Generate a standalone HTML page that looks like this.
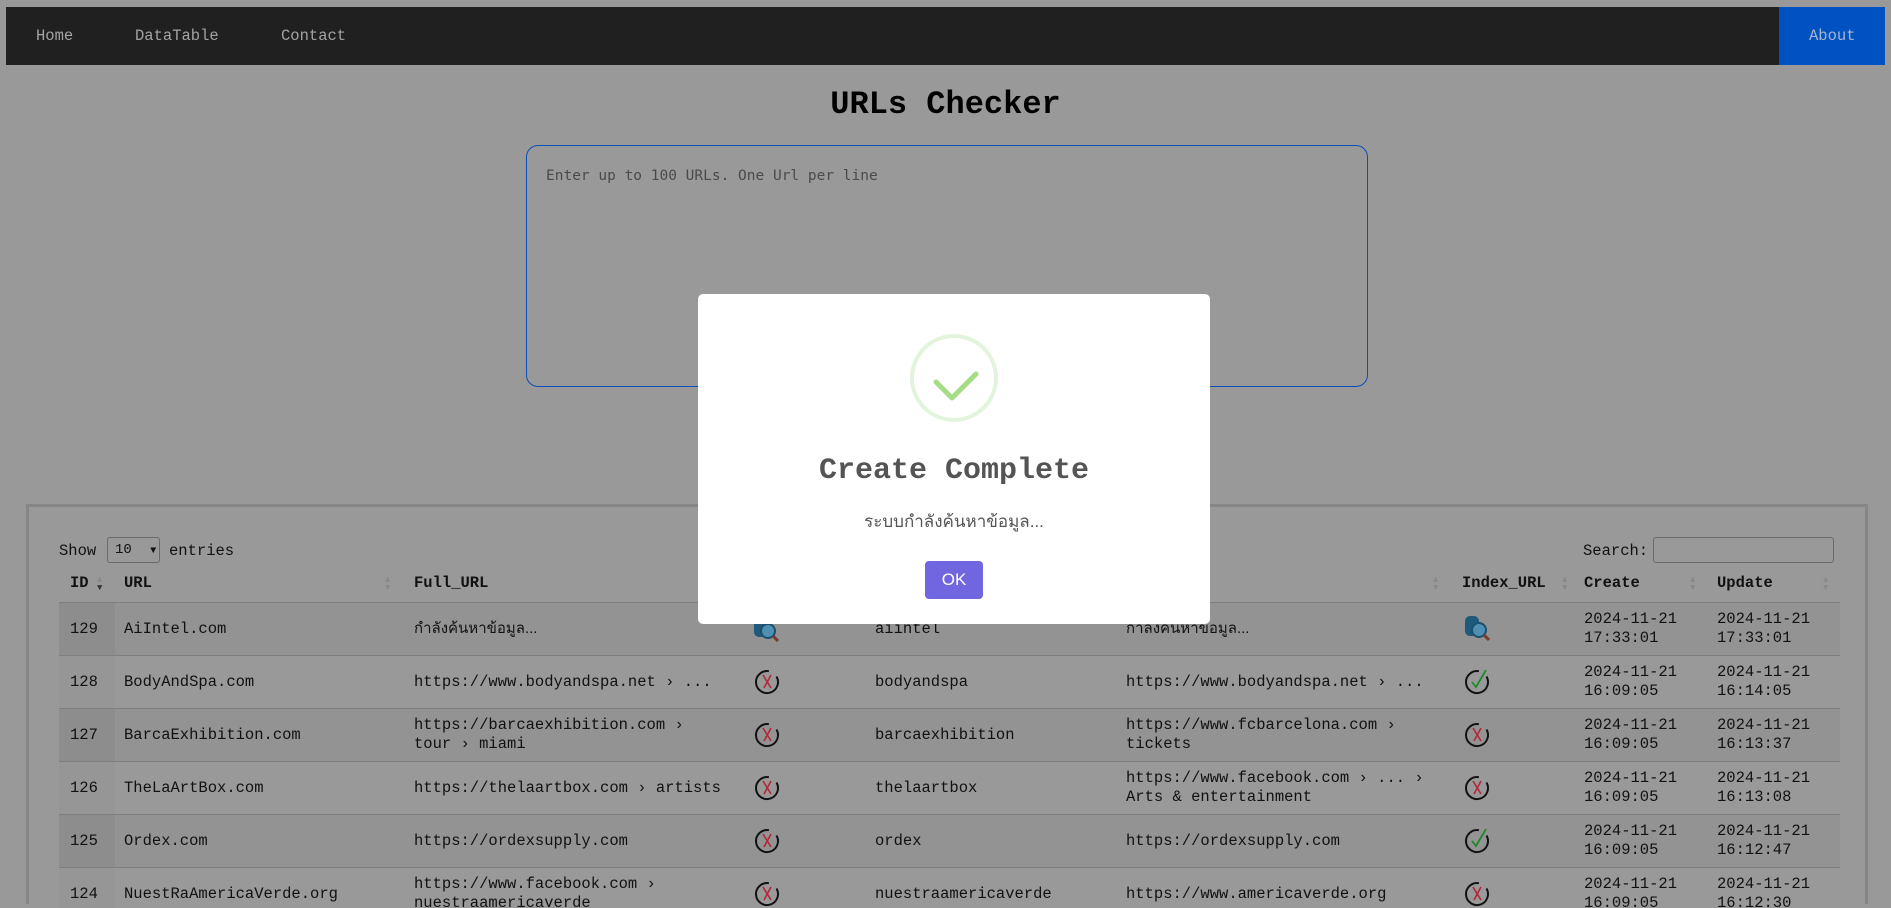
<!DOCTYPE html>
<html style="width:1891px;height:908px;overflow:hidden"><head><meta charset="utf-8">
<style>
*{box-sizing:border-box;margin:0;padding:0}
body{width:1891px;height:908px;overflow:hidden;background:#999;font-family:"Courier New","Liberation Mono","Noto Sans CJK SC",monospace;position:relative;color:#111}
.abs{position:absolute;white-space:nowrap}
.nav{position:absolute;left:6px;top:7px;width:1879px;height:58px;background:#202020}
.nav span{position:absolute;top:20px;font-size:15.5px;color:#a3a3a3}
.about{position:absolute;left:1779px;top:7px;width:106px;height:58px;background:#0051c2}
.title{position:absolute;left:0;width:1891px;top:86px;text-align:center;font-weight:bold;font-size:32px;color:#000}
.ta{position:absolute;left:526px;top:145px;width:842px;height:242px;border:1.5px solid #0a4fb8;border-radius:12px}
.ph{position:absolute;left:19px;top:22px;font-family:"DejaVu Sans Mono",monospace;font-size:14.5px;color:#4a4a4a}
.box{position:absolute;left:26px;top:504px;width:1842px;height:400px;border:3px solid #868686;border-bottom:none}
.t{font-size:15.5px}
.h{font-weight:bold;font-size:15.5px}
.row{position:absolute;left:59px;width:1781px;height:53px;border-top:1.5px solid #7e7e7e}
.dk{background:#939393}
.cell{position:absolute;font-size:15.5px;line-height:19px;white-space:nowrap}
.idc{position:absolute;left:0;top:0;width:56px;height:100%;background:rgba(0,0,0,0.04)}
.sort{position:absolute;font-size:9px;color:#888;line-height:8px}
.ov{position:absolute;left:698px;top:294px;width:512px;height:330px;background:#fff;border-radius:5px}
.thai{font-family:"Liberation Sans","Noto Sans CJK SC",sans-serif}
</style></head><body>
<div class="nav"><span style="left:30px">Home</span><span style="left:129px">DataTable</span><span style="left:275px">Contact</span></div>
<div class="about"><span class="abs" style="left:30px;top:20px;font-size:15.5px;color:#a8b6cc">About</span></div>
<div class="title">URLs Checker</div>
<div class="ta"><div class="ph">Enter up to 100 URLs. One Url per line</div></div>

<div class="box"></div>
<div class="abs t" style="left:59px;top:542px">Show</div>
<div class="abs" style="left:107px;top:537px;width:53px;height:26px;border:1px solid #6a6a6a;border-radius:3px;font-size:14px;padding:4px 0 0 7px">10 <span style="margin-left:10px;font-size:10px">&#9660;</span></div>
<div class="abs t" style="left:169px;top:542px">entries</div>
<div class="abs t" style="left:1583px;top:542px">Search:</div>
<div class="abs" style="left:1653px;top:537px;width:181px;height:26px;border:1px solid #6a6a6a;border-radius:3px"></div>

<div class="abs h" style="left:70px;top:574px">ID</div>
<div class="abs h" style="left:124px;top:574px">URL</div>
<div class="abs h" style="left:414px;top:574px">Full_URL</div>
<div class="abs h" style="left:1126px;top:574px">Name</div>
<div class="abs h" style="left:1462px;top:574px">Index_URL</div>
<div class="abs h" style="left:1584px;top:574px">Create</div>
<div class="abs h" style="left:1717px;top:574px">Update</div>
<div class="sort" style="left:97px;top:576px">▲<br><span style="color:#333">▼</span></div>
<div class="sort" style="left:385px;top:576px">▲<br>▼</div>
<div class="sort" style="left:1433px;top:576px">▲<br>▼</div>
<div class="sort" style="left:1562px;top:576px">▲<br>▼</div>
<div class="sort" style="left:1690px;top:576px">▲<br>▼</div>
<div class="sort" style="left:1823px;top:576px">▲<br>▼</div>

<svg width="0" height="0" style="position:absolute"><defs>
<g id="x"><path d="M23.5 9.5 A11 11 0 1 1 15.9 4.2" fill="none" stroke="#111" stroke-width="2"/><path d="M10 8 L18 21 M18 8 L11 21" stroke="#b0283a" stroke-width="1.6"/></g>
<g id="c"><path d="M23.5 9.5 A11 11 0 1 1 15.9 4.2" fill="none" stroke="#111" stroke-width="2"/><path d="M9 15 L13 20 L23 3" fill="none" stroke="#1e8a2a" stroke-width="1.8"/></g>
<g id="d"><rect x="3" y="3" width="14" height="20" rx="5" fill="#1f5a7a"/><circle cx="17" cy="17" r="7" fill="#4e8fb3" stroke="#1d4f6e" stroke-width="2"/><path d="M22 22 L27 27" stroke="#7a3a2a" stroke-width="3"/></g>
</defs></svg>

<div class="row dk" style="top:602px"><div class="idc"></div>
<div class="cell" style="left:11px;top:17px">129</div><div class="cell" style="left:65px;top:17px">AiIntel.com</div>
<div class="cell thai" style="left:355px;top:16px;font-size:15px">กำลังค้นหาข้อมูล...</div>
<svg class="abs" style="left:692px;top:11px" width="30" height="30"><use href="#d"/></svg>
<div class="cell" style="left:816px;top:17px">aiintel</div>
<div class="cell thai" style="left:1067px;top:16px;font-size:15px">กำลังค้นหาข้อมูล...</div>
<svg class="abs" style="left:1403px;top:10px" width="30" height="30"><use href="#d"/></svg>
<div class="cell" style="left:1525px;top:7px">2024-11-21<br>17:33:01</div><div class="cell" style="left:1658px;top:7px">2024-11-21<br>17:33:01</div></div>

<div class="row" style="top:655px"><div class="idc" style="background:rgba(0,0,0,0.02)"></div>
<div class="cell" style="left:11px;top:17px">128</div><div class="cell" style="left:65px;top:17px">BodyAndSpa.com</div>
<div class="cell" style="left:355px;top:17px">https://www.bodyandspa.net › ...</div>
<svg class="abs" style="left:694px;top:11px" width="30" height="30"><use href="#x"/></svg>
<div class="cell" style="left:816px;top:17px">bodyandspa</div>
<div class="cell" style="left:1067px;top:17px">https://www.bodyandspa.net › ...</div>
<svg class="abs" style="left:1404px;top:11px" width="30" height="30"><use href="#c"/></svg>
<div class="cell" style="left:1525px;top:7px">2024-11-21<br>16:09:05</div><div class="cell" style="left:1658px;top:7px">2024-11-21<br>16:14:05</div></div>

<div class="row dk" style="top:708px"><div class="idc"></div>
<div class="cell" style="left:11px;top:17px">127</div><div class="cell" style="left:65px;top:17px">BarcaExhibition.com</div>
<div class="cell" style="left:355px;top:7px">https://barcaexhibition.com ›<br>tour › miami</div>
<svg class="abs" style="left:694px;top:11px" width="30" height="30"><use href="#x"/></svg>
<div class="cell" style="left:816px;top:17px">barcaexhibition</div>
<div class="cell" style="left:1067px;top:7px">https://www.fcbarcelona.com ›<br>tickets</div>
<svg class="abs" style="left:1404px;top:11px" width="30" height="30"><use href="#x"/></svg>
<div class="cell" style="left:1525px;top:7px">2024-11-21<br>16:09:05</div><div class="cell" style="left:1658px;top:7px">2024-11-21<br>16:13:37</div></div>

<div class="row" style="top:761px"><div class="idc" style="background:rgba(0,0,0,0.02)"></div>
<div class="cell" style="left:11px;top:17px">126</div><div class="cell" style="left:65px;top:17px">TheLaArtBox.com</div>
<div class="cell" style="left:355px;top:17px">https://thelaartbox.com › artists</div>
<svg class="abs" style="left:694px;top:11px" width="30" height="30"><use href="#x"/></svg>
<div class="cell" style="left:816px;top:17px">thelaartbox</div>
<div class="cell" style="left:1067px;top:7px">https://www.facebook.com › ... ›<br>Arts &amp; entertainment</div>
<svg class="abs" style="left:1404px;top:11px" width="30" height="30"><use href="#x"/></svg>
<div class="cell" style="left:1525px;top:7px">2024-11-21<br>16:09:05</div><div class="cell" style="left:1658px;top:7px">2024-11-21<br>16:13:08</div></div>

<div class="row dk" style="top:814px"><div class="idc"></div>
<div class="cell" style="left:11px;top:17px">125</div><div class="cell" style="left:65px;top:17px">Ordex.com</div>
<div class="cell" style="left:355px;top:17px">https://ordexsupply.com</div>
<svg class="abs" style="left:694px;top:11px" width="30" height="30"><use href="#x"/></svg>
<div class="cell" style="left:816px;top:17px">ordex</div>
<div class="cell" style="left:1067px;top:17px">https://ordexsupply.com</div>
<svg class="abs" style="left:1404px;top:11px" width="30" height="30"><use href="#c"/></svg>
<div class="cell" style="left:1525px;top:7px">2024-11-21<br>16:09:05</div><div class="cell" style="left:1658px;top:7px">2024-11-21<br>16:12:47</div></div>

<div class="row" style="top:867px;height:41px"><div class="idc" style="background:rgba(0,0,0,0.02)"></div>
<div class="cell" style="left:11px;top:17px">124</div><div class="cell" style="left:65px;top:17px">NuestRaAmericaVerde.org</div>
<div class="cell" style="left:355px;top:7px">https://www.facebook.com ›<br>nuestraamericaverde</div>
<svg class="abs" style="left:694px;top:11px" width="30" height="30"><use href="#x"/></svg>
<div class="cell" style="left:816px;top:17px">nuestraamericaverde</div>
<div class="cell" style="left:1067px;top:17px">https://www.americaverde.org</div>
<svg class="abs" style="left:1404px;top:11px" width="30" height="30"><use href="#x"/></svg>
<div class="cell" style="left:1525px;top:7px">2024-11-21<br>16:09:05</div><div class="cell" style="left:1658px;top:7px">2024-11-21<br>16:12:30</div></div>

<div class="ov">
<svg class="abs" style="left:212px;top:40px" width="88" height="88"><circle cx="44" cy="44" r="42" fill="none" stroke="#e3f4dc" stroke-width="4"/><path d="M26 48 L42 64 L66 40" fill="none" stroke="#a5dc86" stroke-width="5" stroke-linecap="round" stroke-linejoin="round"/></svg>
<div class="abs" style="left:0;width:512px;top:160px;text-align:center;font-weight:bold;font-size:30px;color:#545454">Create Complete</div>
<div class="abs thai" style="left:0;width:512px;top:214px;text-align:center;font-size:17px;color:#545454">ระบบกำลังค้นหาข้อมูล...</div>
<div class="abs" style="left:227px;top:267px;width:58px;height:38px;background:#7066e0;border-radius:4px;color:#fff;font-family:'Liberation Sans',sans-serif;font-size:17px;text-align:center;line-height:38px">OK</div>
</div>
</body></html>
